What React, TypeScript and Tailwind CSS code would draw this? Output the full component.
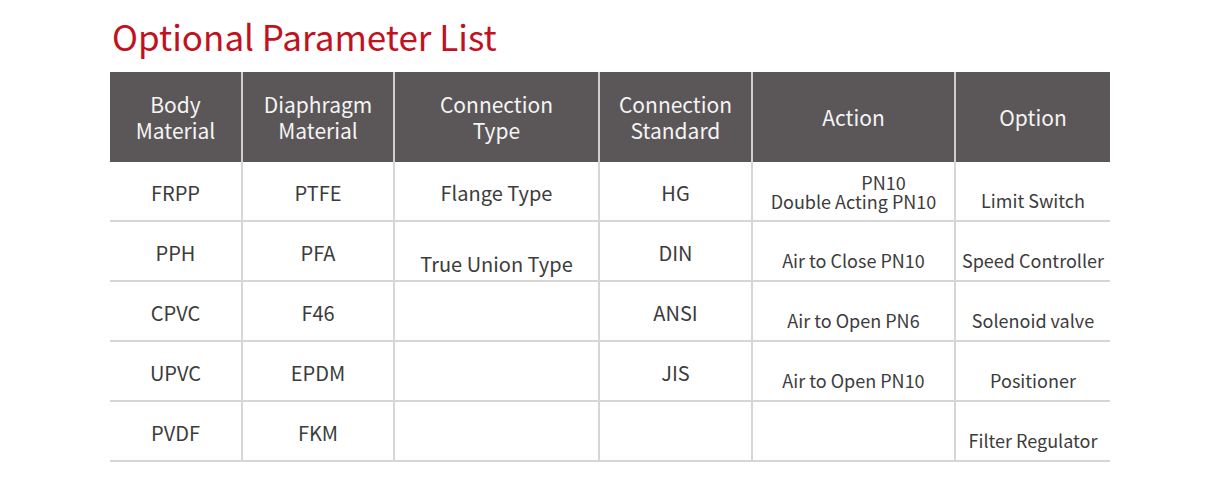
const head = [
  ["Body", "Material"],
  ["Diaphragm", "Material"],
  ["Connection", "Type"],
  ["Connection", "Standard"],
  ["Action"],
  ["Option"],
];

// text lines + extra top offset
type Cell = { t: string[]; dy?: number };

const rows: Cell[][] = [
  [
    { t: ["FRPP"], dy: 4 },
    { t: ["PTFE"], dy: 4 },
    { t: ["Flange Type"], dy: 4 },
    { t: ["HG"], dy: 4 },
    { t: ["PN10", "Double Acting PN10"], dy: 2 },
    { t: ["Limit Switch"], dy: 18 },
  ],
  [
    { t: ["PPH"], dy: 4 },
    { t: ["PFA"], dy: 4 },
    { t: ["True Union Type"], dy: 26 },
    { t: ["DIN"], dy: 4 },
    { t: ["Air to Close PN10"], dy: 18 },
    { t: ["Speed Controller"], dy: 18 },
  ],
  [
    { t: ["CPVC"], dy: 4 },
    { t: ["F46"], dy: 4 },
    { t: [] },
    { t: ["ANSI"], dy: 4 },
    { t: ["Air to Open PN6"], dy: 18 },
    { t: ["Solenoid valve"], dy: 18 },
  ],
  [
    { t: ["UPVC"], dy: 4 },
    { t: ["EPDM"], dy: 4 },
    { t: [] },
    { t: ["JIS"], dy: 4 },
    { t: ["Air to Open PN10"], dy: 18 },
    { t: ["Positioner"], dy: 18 },
  ],
  [
    { t: ["PVDF"], dy: 4 },
    { t: ["FKM"], dy: 4 },
    { t: [] },
    { t: [] },
    { t: [] },
    { t: ["Filter Regulator"], dy: 18 },
  ],
];

const cols = "grid grid-cols-[133px_152px_205px_153px_203px_154px]";

export default function App() {
  return (
    <div
      className="w-[1220px] h-[485px] bg-white pl-[110px] pt-[12px]"
      style={{ fontFamily: '"Noto Sans CJK SC", "Noto Sans", sans-serif' }}
    >
      <h1 className="text-[35px] leading-[48px] text-[#c0121f] pl-[2px] mb-[12px]">
        Optional Parameter List
      </h1>
      <div className="w-[1000px]">
        <div className={cols}>
          {head.map((h, i) => (
            <div
              key={i}
              className={
                "h-[90px] bg-[#5b5758] text-[#f4f4f4] text-[21px] leading-[26px] flex flex-col items-center justify-center " +
                (i < 5 ? "border-r-2 border-[#cfcfcf]" : "")
              }
            >
              {h.map((l) => (
                <span key={l}>{l}</span>
              ))}
            </div>
          ))}
        </div>
        {rows.map((r, ri) => (
          <div key={ri} className={cols}>
            {r.map((c, ci) => (
              <div
                key={ci}
                className={
                  "h-[60px] border-b-2 border-[#d6d6d6] text-[#3c3c3c] flex flex-col items-center justify-center " +
                  (ci < 5 ? "border-r-2 " : "") +
                  (ci >= 4 ? "text-[18px] leading-[19px] " : "text-[20px] leading-[24px] ")
                }
                style={c.dy ? { paddingTop: c.dy } : undefined}
              >
                {c.t.map((l, li) => (
                  <span key={li} className={c.t.length > 1 && li === 0 ? "pl-[60px]" : ""}>
                    {l}
                  </span>
                ))}
              </div>
            ))}
          </div>
        ))}
      </div>
    </div>
  );
}
